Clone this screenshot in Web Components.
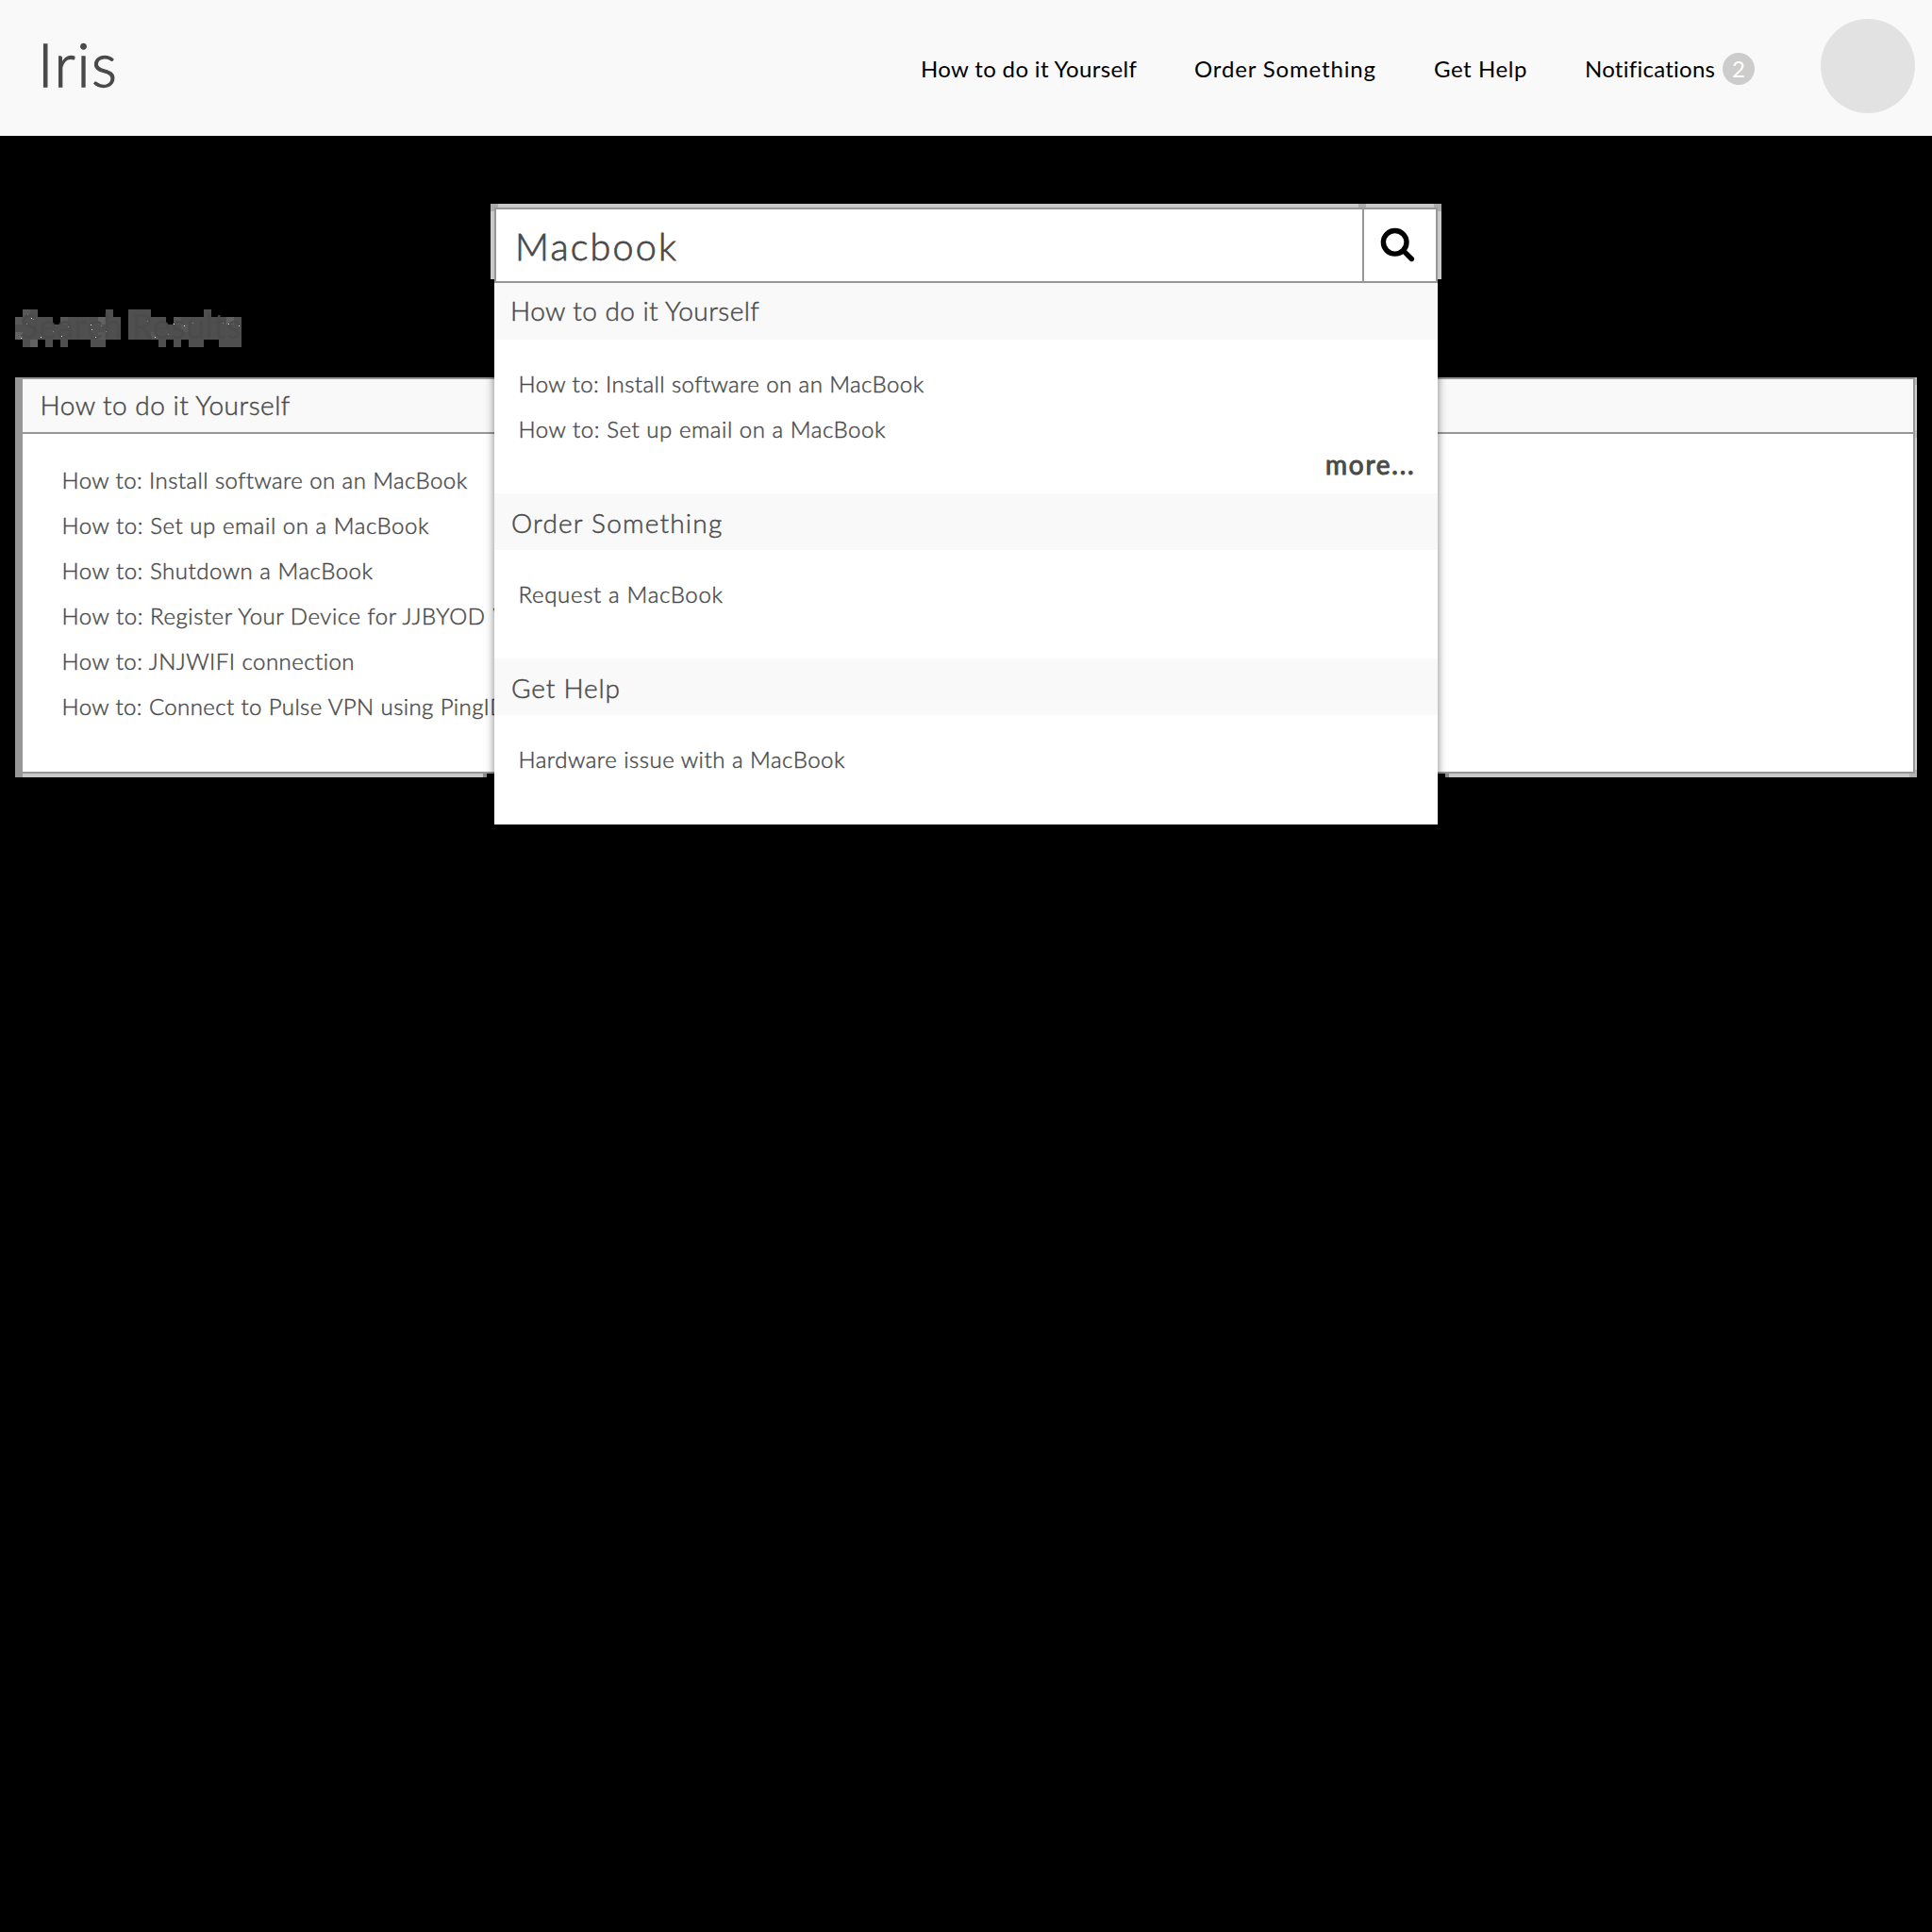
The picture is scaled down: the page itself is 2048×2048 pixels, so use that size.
<!DOCTYPE html>
<html lang="en">
<head>
<meta charset="utf-8">
<title>Iris</title>
<style>
html,body{margin:0;background:#000}
body{font-family:Lato,"Open Sans",sans-serif;font-weight:300;color:#4a4a4a;width:2048px;height:2048px;overflow:hidden;-webkit-text-stroke:.45px currentColor}
</style>
</head>
<body>
<iris-app></iris-app>
<script>
const define = (name, html, setup) => {
  const tpl = document.createElement('template');
  tpl.innerHTML = html;
  customElements.define(name, class extends HTMLElement {
    connectedCallback() {
      if (this.shadowRoot) return;
      this.attachShadow({mode: 'open'}).append(tpl.content.cloneNode(true));
      if (setup) setup(this, this.shadowRoot);
    }
  });
};

/* A line of text tracked so that its ink fills the width given in "w". */
const ctx = document.createElement('canvas').getContext('2d');
define('fit-text', `<style>:host{display:block;white-space:pre;width:var(--w)}span{display:inline-block;margin-left:var(--b)}</style><span><slot></slot></span>`, el => {
  const s = getComputedStyle(el), t = el.firstChild.textContent, w = +el.getAttribute('w');
  ctx.font = `${s.fontWeight} ${s.fontSize} ${s.fontFamily}`;
  const m = ctx.measureText(t), ink = m.actualBoundingBoxLeft + m.actualBoundingBoxRight;
  el.style.setProperty('--w', w + 'px');
  el.style.setProperty('--b', m.actualBoundingBoxLeft + 'px');
  if (t.length > 1) el.style.letterSpacing = (w - ink) / (t.length - 1) + 'px';
});

define('iris-header', `<style>
:host{display:flex;align-items:center;height:144px;background:#f9f9f9;box-sizing:border-box;padding:0 18px 0 46px}
.logo{font-size:63px;line-height:144px;height:144px;margin-top:-9px;margin-right:auto;-webkit-text-stroke-width:1.300px}
nav{display:flex;align-items:center;font-size:24px;line-height:144px;font-weight:400;color:#000;padding-top:1px;gap:63px;-webkit-text-stroke-width:0}
.first{margin-right:-3px}
.note{display:flex;align-items:center;gap:8px;margin-left:1px}
b{width:34px;height:34px;border-radius:50%;background:#ccc;color:#fff;font-weight:400;line-height:34px;text-align:center;margin-top:1px}
i{width:100px;height:100px;border-radius:50%;background:#e2e2e2;margin:-4px 0 0 70px}
</style>
<fit-text class="logo" w="75">Iris</fit-text>
<nav><fit-text class="first" w="229">How to do it Yourself</fit-text><fit-text w="191">Order Something</fit-text><fit-text w="97">Get Help</fit-text>
<span class="note"><fit-text w="136">Notifications</fit-text><b>2</b></span></nav><i></i>`);

define('search-box', `<style>
:host{display:block;position:relative;width:1008px;height:84px;margin:72px auto 0;z-index:2;box-sizing:border-box;padding:4px 4px 0;
background:linear-gradient(90deg,#ababab 8px,#c9c9c9 8px 920px,#ababab 920px 928px,#c9c9c9 928px 1000px,#ababab 1000px) 0 0/100% 8px no-repeat,
linear-gradient(#c9c9c9,#c9c9c9) 0 0/100% 80px no-repeat}
.box{display:flex;height:80px;box-sizing:border-box;border:2px solid #979797;background:#fff}
.field{flex:1;padding:1px 0 0 24px;font-size:39.5px;line-height:76px;height:75px;-webkit-text-stroke-width:.800px}
.go{width:76px;border-left:2px solid #979797}
svg{display:block}
.menu{position:absolute;left:4px;top:84px}
</style>
<div class="box"><div class="field"><fit-text w="167">Macbook</fit-text></div>
<div class="go"><svg width="76" height="76" viewBox="0 0 76 76" fill="none" stroke="#000" stroke-width="5.400"><circle cx="32.700" cy="34.800" r="12.300"/><path d="M42.500 44.600L50.400 52.500" stroke-linecap="round"/></svg></div></div>
<div class="menu"><slot></slot></div>`);

define('suggest-menu', `<style>:host{display:block;width:1000px;height:574px;background:#fff;box-shadow:0 0 9px rgba(0,0,0,.5);clip-path:inset(0 -12px -12px -12px)}</style><slot></slot>`);

define('suggest-group', `<style>
:host{display:block}
header{height:60px;background:#f9f9f9;padding-left:19px;box-sizing:border-box;font-size:28px;line-height:var(--lh,62px);overflow:hidden}
.body{height:var(--h,115px);box-sizing:border-box;padding:23px 0 0 27.500px;font-size:24px;line-height:48px}
</style>
<header><slot name="title"></slot></header><div class="body"><slot></slot></div>`);

define('more-link', `<style>:host{display:flex;justify-content:flex-end;padding-right:26px;margin-top:-3px;font-size:28px;line-height:32px;font-weight:400;-webkit-text-stroke-width:1px}</style><slot></slot>`);

define('results-title', `<style>
:host{display:block;position:relative;width:240px;height:40px;margin:28px 0 0 16px}
svg{display:block}
fit-text{position:absolute;left:6px;top:0;font-size:36px;font-weight:400;line-height:34px;color:#4b4b4b;-webkit-text-stroke-width:0}
</style>
<svg width="240" height="40" shape-rendering="crispEdges">
<path fill="#4f4f4f" d="M8 0h16v8h-16zM96 0h8v8h-8zM120 0h24v8h-24zM200 0h8v8h-8zM0 8h40v24h-40zM40 16h8v16h-8zM48 8h64v24h-64zM120 8h40v24h-40zM160 16h8v16h-8zM168 8h72v24h-72zM8 32h16v8h-16zM32 32h8v8h-8zM48 32h8v8h-8zM80 32h16v8h-16zM152 32h8v8h-8zM168 32h8v8h-8zM184 32h16v8h-16zM216 32h24v8h-24z"/>
<path fill="#626262" d="M16 32h8v8h-8zM0 24h8v8h-8zM88 8h8v8h-8zM224 8h8v8h-8z"/>
<path fill="#585858" d="M0 8h8v8h-8zM48 8h8v8h-8zM168 8h8v8h-8zM176 16h8v8h-8zM88 24h8v8h-8zM144 24h8v8h-8zM8 0h8v8h-8z"/>
</svg><fit-text w="233">Search Results</fit-text>
<svg width="240" height="40" style="position:absolute;left:0;top:0" shape-rendering="crispEdges">
<path fill="#fff" d="M17 9h1v1h-1zM6 30h1v1h-1zM27 29h1v1h-1zM49 28h1v1h-1zM80 16h1v1h-1zM81 21h1v1h-1zM85 29h1v1h-1zM148 29h1v1h-1zM168 15h1v1h-1zM179 17h1v1h-1zM226 15h1v1h-1zM237 17h1v1h-1z"/>
<path fill="#888" d="M13 5h1v1h-1zM12 15h1v1h-1zM19 10h1v1h-1zM40 23h1v1h-1zM56 18h1v1h-1zM91 17h1v1h-1zM96 23h1v1h-1zM140 12h1v1h-1zM162 26h1v1h-1zM188 14h1v1h-1zM220 14h1v1h-1z"/></svg>`);

define('result-card', `<style>
:host{display:block;box-sizing:border-box;width:2016px;height:424px;margin:32px 0 0 16px;padding:0 2px 4px 8px;
background:linear-gradient(90deg,#979797 8px,#c9c9c9 8px 496px,#8a8a8a 496px 500px,#000 500px 1516px,#8a8a8a 1516px 1520px,#c9c9c9 1520px 2008px,#b0b0b0 2008px) 0 100%/100% 4px no-repeat,
linear-gradient(#b8b8b8 8px,#d2d2d2 8px 56px,#bdbdbd 56px 64px,#d2d2d2 64px 416px,#b0b0b0 416px) 100% 0/2px 100% no-repeat,#979797}
.in{height:420px;box-sizing:border-box;border:solid #979797;border-width:2px 2px 2px 0;background:#fff}
header{height:58px;box-sizing:border-box;border-bottom:2px solid #979797;background:#f9f9f9;padding-left:20.500px;font-size:28px;line-height:54px}
.list{padding:25px 0 0 43.500px;font-size:24px;line-height:48px}
</style>
<div class="in"><header><slot name="title"></slot></header><div class="list"><slot></slot></div></div>`);

define('iris-app', `<style>:host{display:flow-root}.row{display:flex;gap:6px}</style>
<iris-header></iris-header>
<search-box><suggest-menu>
<suggest-group style="--lh:58px;--h:163px"><fit-text slot="title" w="264">How to do it Yourself</fit-text>
<fit-text w="428">How to: Install software on an MacBook</fit-text>
<fit-text w="388">How to: Set up email on a MacBook</fit-text>
<more-link><fit-text w="92">more...</fit-text></more-link></suggest-group>
<suggest-group><fit-text slot="title" w="222.500">Order Something</fit-text><fit-text w="215">Request a MacBook</fit-text></suggest-group>
<suggest-group><fit-text slot="title" w="112.500">Get Help</fit-text><fit-text w="345">Hardware issue with a MacBook</fit-text></suggest-group>
</suggest-menu></search-box>
<results-title></results-title>
<result-card><fit-text slot="title" w="265">How to do it Yourself</fit-text>
<fit-text w="428">How to: Install software on an MacBook</fit-text>
<fit-text w="388">How to: Set up email on a MacBook</fit-text>
<fit-text w="328.500">How to: Shutdown a MacBook</fit-text>
<div class="row"><fit-text w="449">How to: Register Your Device for JJBYOD</fit-text><span>W</span></div>
<fit-text w="308.500">How to: JNJWIFI connection</fit-text>
<fit-text w="470">How to: Connect to Pulse VPN using PingID</fit-text></result-card>`);
</script>
</body>
</html>
